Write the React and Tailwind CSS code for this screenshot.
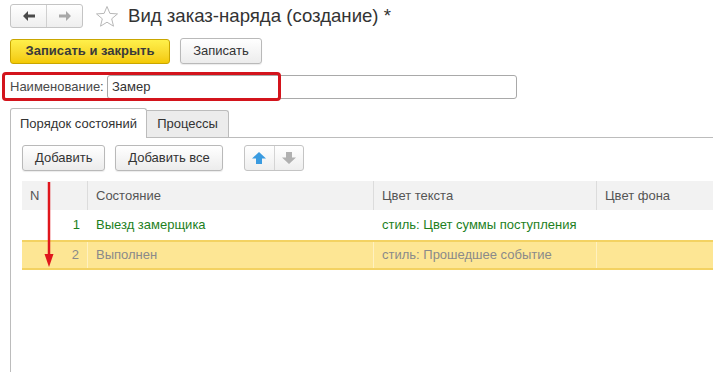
import { useState } from "react";

const rows = [
  { n: 1, name: "Выезд замерщика", style: "стиль: Цвет суммы поступления", color: "text-[#1d7f1d]" },
  { n: 2, name: "Выполнен", style: "стиль: Прошедшее событие", color: "text-[#8a8a8a]", selected: true },
];

const Btn = ({ children, className = "" }) => (
  <button
    className={`h-[26px] px-[12px] border border-[#b9b9b9] rounded-[3px] bg-gradient-to-b from-white to-[#ececec] text-[13px] text-[#333] shadow-[0_1px_1px_rgba(0,0,0,0.08)] ${className}`}
  >
    {children}
  </button>
);

const App = () => {
  const [name] = useState("Замер");

  return (
    <div className="relative w-[713px] h-[372px] overflow-hidden bg-white text-[13px] text-[#333] font-['Liberation_Sans',Arial,sans-serif]">
      {/* Header */}
      <div className="flex items-center pl-[10px] pt-[4px] h-[28px]">
        <div className="flex h-[24px] w-[73px] border border-[#c4c4c4] rounded-[3px] bg-gradient-to-b from-white to-[#eeeeee]">
          <div className="flex-1 flex items-center justify-center border-r border-[#d0d0d0]">
            <svg width="12" height="10" viewBox="0 0 12 10">
              <path d="M5 0 L0 5 L5 10 L5 6.5 L12 6.5 L12 3.5 L5 3.5 Z" fill="#4a4a4a" />
            </svg>
          </div>
          <div className="flex-1 flex items-center justify-center">
            <svg width="12" height="10" viewBox="0 0 12 10">
              <path d="M7 0 L12 5 L7 10 L7 6.5 L0 6.5 L0 3.5 L7 3.5 Z" fill="#a8a8a8" />
            </svg>
          </div>
        </div>
        <svg className="ml-[12px]" width="24" height="23" viewBox="0 0 24 23">
          <path
            d="M12 1.5 L14.9 8.4 L22.5 8.9 L16.7 13.8 L18.5 21.2 L12 17.2 L5.5 21.2 L7.3 13.8 L1.5 8.9 L9.1 8.4 Z"
            fill="none"
            stroke="#b8b8b8"
            strokeWidth="1"
          />
        </svg>
        <h1 className="ml-[9px] text-[18.6px] text-[#333] leading-none">Вид заказ-наряда (создание) *</h1>
      </div>

      {/* Command bar */}
      <div className="flex items-center gap-[10px] pl-[10px] mt-[10px]">
        <button className="h-[25px] w-[160px] border border-[#c9a600] rounded-[3px] bg-gradient-to-b from-[#fff04a] to-[#f3c900] font-bold text-[13px] text-[#3a3a3a]">
          Записать и закрыть
        </button>
        <Btn className="h-[25px] w-[82px]">Записать</Btn>
      </div>

      {/* Name field */}
      <div className="flex items-center pl-[10px] mt-[11px]">
        <span className="text-[#4a4a4a] w-[97px]">Наименование:</span>
        <div className="h-[24px] w-[410px] border border-[#a9a9a9] rounded-[3px] flex items-center pl-[4px] text-[#333]">
          {name}
        </div>
      </div>

      {/* Tabs */}
      <div className="flex pl-[10px] mt-[9px] items-end">
        <div className="h-[30px] w-[137px] border border-[#bcbcbc] border-b-0 rounded-t-[3px] bg-white flex items-center justify-center text-[#333] -mb-px relative z-10">
          Порядок состояний
        </div>
        <div className="h-[27px] w-[82px] border border-[#bcbcbc] border-l-0 border-b-0 rounded-tr-[3px] bg-[#ececec] flex items-center justify-center text-[#333]">
          Процессы
        </div>
      </div>

      {/* Tab panel */}
      <div className="ml-[10px] border-t border-l border-[#bcbcbc] h-[240px] pl-[11px] pt-[7px]">
        <div className="flex items-center">
          <Btn className="w-[83px]">Добавить</Btn>
          <Btn className="w-[108px] ml-[10px]">Добавить все</Btn>
          <div className="ml-[21px] flex h-[26px] w-[60px] border border-[#c4c4c4] rounded-[3px] bg-gradient-to-b from-white to-[#eeeeee]">
            <div className="flex-1 flex items-center justify-center border-r border-[#d4d4d4]">
              <svg width="14" height="12" viewBox="0 0 14 12">
                <path d="M7 0 L14 6.5 L10 6.5 L10 12 L4 12 L4 6.5 L0 6.5 Z" fill="#3a9be0" />
              </svg>
            </div>
            <div className="flex-1 flex items-center justify-center">
              <svg width="14" height="12" viewBox="0 0 14 12">
                <path d="M7 12 L14 5.5 L10 5.5 L10 0 L4 0 L4 5.5 L0 5.5 Z" fill="#b0b0b0" />
              </svg>
            </div>
          </div>
        </div>

        {/* Table */}
        <div className="mt-[10px] w-[691px]">
          <div className="flex h-[29px] bg-[#f2f2f2] text-[#555]">
            <div className="w-[66px] pl-[8px] flex items-center border-r border-[#dcdcdc]">N</div>
            <div className="w-[286px] pl-[8px] flex items-center border-r border-[#dcdcdc]">Состояние</div>
            <div className="w-[223px] pl-[8px] flex items-center border-r border-[#dcdcdc]">Цвет текста</div>
            <div className="flex-1 pl-[8px] flex items-center">Цвет фона</div>
          </div>
          {rows.map((r) => (
            <div
              key={r.n}
              className={`flex h-[30px] ${r.color} ${
                r.selected ? "bg-[#fde694] border-y-[2px] border-[#f3d262]" : "bg-white"
              }`}
            >
              <div className={`w-[66px] pr-[8px] flex items-center justify-end ${r.selected ? "border-r border-[#fff1bf]" : ""}`}>
                {r.n}
              </div>
              <div className={`w-[286px] pl-[8px] flex items-center ${r.selected ? "border-r border-[#fff1bf]" : ""}`}>
                {r.name}
              </div>
              <div className={`w-[223px] pl-[8px] flex items-center ${r.selected ? "border-r border-[#fff1bf]" : ""}`}>
                {r.style}
              </div>
              <div className="flex-1" />
            </div>
          ))}
        </div>
      </div>

      {/* Red highlight around the name field */}
      <div className="absolute left-[2px] top-[72px] w-[279px] h-[29px] border-[3px] border-[#d3141c] rounded-[4px] pointer-events-none" />

      {/* Red arrow */}
      <svg className="absolute left-[44px] top-[182px] pointer-events-none" width="10" height="86" viewBox="0 0 10 86">
        <line x1="5" y1="0" x2="5" y2="74" stroke="#e0161c" strokeWidth="2.5" />
        <path d="M0.5 72 L9.5 72 L5 85 Z" fill="#e0161c" />
      </svg>
    </div>
  );
};

export default App;
